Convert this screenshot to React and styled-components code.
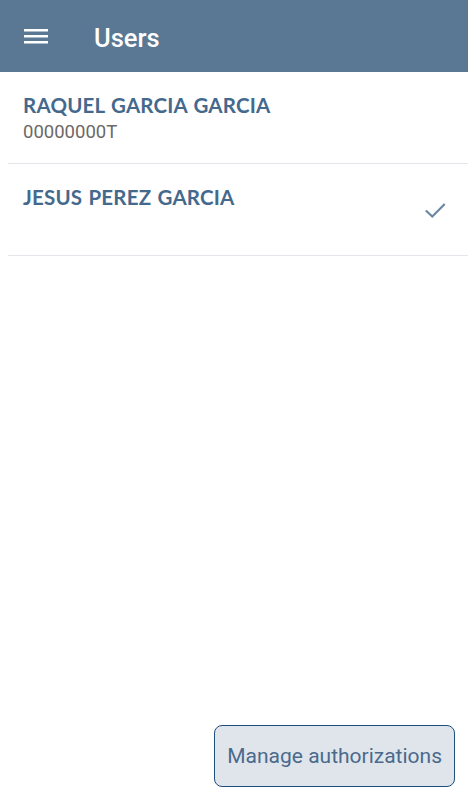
import React from 'react'
import styled, { createGlobalStyle } from 'styled-components'

const GlobalStyle = createGlobalStyle`
  html, body {
    margin: 0;
    padding: 0;
    background: #ffffff;
  }
  #root {
    min-height: 100vh;
  }
`

const users = [
  { name: 'RAQUEL GARCIA GARCIA', doc: '00000000T', selected: false },
  { name: 'JESUS PEREZ GARCIA', doc: '', selected: true },
]

const App = () => {
  return (
    <>
      <GlobalStyle />
      <Page>
        <TopBar>
          <MenuButton aria-label="menu">
            <svg width="24" height="24" viewBox="0 0 24 24">
              <path d="M0 5h24v2.5H0zM0 11h24v2.5H0zM0 17h24v2.5H0z" fill="#ffffff" />
            </svg>
          </MenuButton>
          <Title>Users</Title>
        </TopBar>

        <List>
          {users.map((u) => (
            <Row key={u.name}>
              <Info>
                <Name>{u.name}</Name>
                {u.doc && <Doc>{u.doc}</Doc>}
              </Info>
              {u.selected && (
                <Check width="26" height="26" viewBox="0 0 24 24">
                  <path d="M3.5 12.5l6 5.5L21 6.5" fill="none" stroke="#6a87a3" strokeWidth="2" />
                </Check>
              )}
            </Row>
          ))}
        </List>

        <Footer>
          <ManageButton>Manage authorizations</ManageButton>
        </Footer>
      </Page>
    </>
  )
}

const Page = styled.div`
  display: flex;
  flex-direction: column;
  height: 800px;
  width: 468px;
  overflow: hidden;
`

const TopBar = styled.header`
  display: flex;
  align-items: center;
  height: 72px;
  padding: 0 24px;
  background: #5a7894;
  flex-shrink: 0;
`

const MenuButton = styled.button`
  display: flex;
  align-items: center;
  background: none;
  border: none;
  padding: 0;
  margin-right: 46px;
`

const Title = styled.h1`
  margin: 3px 0 0;
  font-family: Roboto, sans-serif;
  font-weight: 500;
  font-size: 25.5px;
  color: #ffffff;
`

const List = styled.div`
  display: flex;
  flex-direction: column;
  padding-left: 8px;
`

const Row = styled.div`
  display: flex;
  align-items: flex-start;
  justify-content: space-between;
  height: 92px;
  padding: 21px 20px 0 15px;
  border-bottom: 1.5px solid #e3e6ea;
  box-sizing: border-box;
`

const Info = styled.div`
  display: flex;
  flex-direction: column;
`

const Name = styled.div`
  font-family: Lato, sans-serif;
  font-weight: 700;
  font-size: 20.5px;
  letter-spacing: 0.2px;
  word-spacing: 1px;
  color: #45698d;
  line-height: 24px;
`

const Doc = styled.div`
  margin-top: 3px;
  font-family: Roboto, sans-serif;
  font-size: 18.5px;
  color: #6c6866;
  line-height: 24px;
`

const Check = styled.svg`
  margin-top: 12px;
`

const Footer = styled.div`
  display: flex;
  justify-content: flex-end;
  margin-top: auto;
  padding: 0 13px 13px 0;
`

const ManageButton = styled.button`
  height: 62px;
  padding: 0 12px;
  border: 1.5px solid #1d4f7d;
  border-radius: 8px;
  background: #e0e5ec;
  font-family: Roboto, sans-serif;
  font-size: 21px;
  color: #4a6a8b;
`

export default App
